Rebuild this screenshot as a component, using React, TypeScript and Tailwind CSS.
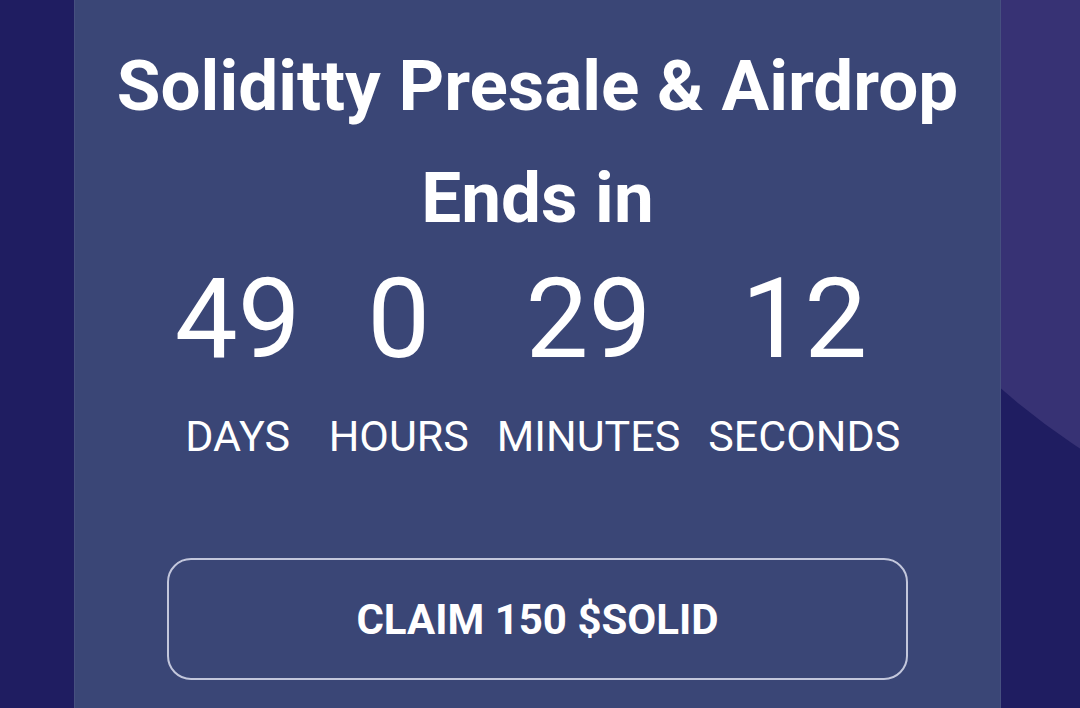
import React from "react";

const units = [
  { value: 49, label: "DAYS" },
  { value: 0, label: "HOURS" },
  { value: 29, label: "MINUTES" },
  { value: 12, label: "SECONDS" },
];

const App = () => {
  return (
    <div
      className="relative h-[708px] w-full overflow-hidden bg-[#1f1d61]"
      style={{ fontFamily: "Roboto, 'Liberation Sans', sans-serif" }}
    >
      {/* soft blob in the corner behind the card */}
      <div className="absolute left-[762px] top-[-838px] h-[1400px] w-[1400px] rounded-full bg-[#373274]" />

      <div className="relative ml-[74px] h-full w-[927px] border-x border-[#46507f] bg-[#3a4676] text-white">
        <div className="flex flex-col items-center pt-[30px]">
          <h1 className="text-center text-[71px] font-bold leading-[112px]">
            Soliditty Presale &amp; Airdrop
            <br />
            Ends in
          </h1>

          <div className="mt-[5px] flex justify-center gap-[28px]">
            {units.map((u) => (
              <div key={u.label} className="flex flex-col items-center">
                <span className="text-[112px] font-normal leading-[120px]">{u.value}</span>
                <span className="mt-[32px] text-[43px] leading-[50px]">{u.label}</span>
              </div>
            ))}
          </div>

          <button className="mt-[97px] flex h-[122px] w-[741px] items-center justify-center rounded-[24px] border-2 border-[#c3c7dc] text-[42px] font-bold">
            CLAIM 150 $SOLID
          </button>
        </div>
      </div>
    </div>
  );
};

export default App;
